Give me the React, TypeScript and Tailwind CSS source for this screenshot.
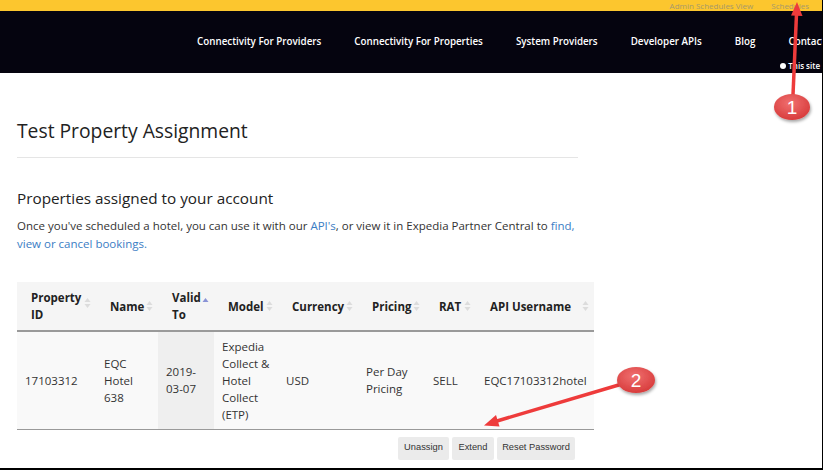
import React from 'react';

const FONT = { fontFamily: '"Open Sans", "Noto Sans", Arial, sans-serif' };

type Col = { label: string[]; width: number; sorted?: boolean };

const columns: Col[] = [
  { label: ['Property', 'ID'], width: 79 },
  { label: ['Name'], width: 62 },
  { label: ['Valid', 'To'], width: 56, sorted: true },
  { label: ['Model'], width: 64 },
  { label: ['Currency'], width: 80 },
  { label: ['Pricing'], width: 67 },
  { label: ['RAT'], width: 51 },
  { label: ['API Username'], width: 118 },
];

const row = [
  ['17103312'],
  ['EQC', 'Hotel', '638'],
  ['2019-', '03-07'],
  ['Expedia', 'Collect &', 'Hotel', 'Collect', '(ETP)'],
  ['USD'],
  ['Per Day', 'Pricing'],
  ['SELL'],
  ['EQC17103312hotel'],
];

// DataTables-style sort arrows
function SortIcon({ active }: { active?: boolean }) {
  return (
    <svg width="7" height="12" viewBox="0 0 7 12" className="shrink-0">
      <path d="M3.5 1 L6.5 5 L0.5 5 Z" fill={active ? '#8a93d6' : '#dcdcdc'} />
      {!active && <path d="M3.5 11 L6.5 7 L0.5 7 Z" fill="#dcdcdc" />}
    </svg>
  );
}

function Annotations() {
  return (
    <svg className="pointer-events-none absolute left-0 top-0" width="824" height="470">
      <defs>
        <radialGradient id="bubble" cx="45%" cy="35%" r="65%">
          <stop offset="0%" stopColor="#f07070" />
          <stop offset="100%" stopColor="#d83c3c" />
        </radialGradient>
        <filter id="shadow" x="-30%" y="-30%" width="160%" height="170%">
          <feDropShadow dx="1" dy="2" stdDeviation="1.5" floodColor="#000" floodOpacity="0.35" />
        </filter>
      </defs>
      {/* arrow 1 */}
      <line x1="793" y1="95" x2="796.5" y2="14" stroke="#ee3b3b" strokeWidth="3.5" />
      <path d="M797 2 L802.5 16 L791 15.5 Z" fill="#ee3b3b" />
      <ellipse cx="792" cy="107" rx="18" ry="13" fill="url(#bubble)" filter="url(#shadow)" />
      <text x="792" y="114" textAnchor="middle" fontSize="19" fill="#fff" fontFamily="Arial, sans-serif">1</text>
      {/* arrow 2 */}
      <line x1="622" y1="384" x2="497" y2="421" stroke="#ee3b3b" strokeWidth="3.5" />
      <path d="M484 425.5 L496 415 L499.5 426.5 Z" fill="#ee3b3b" />
      <ellipse cx="636" cy="380" rx="19" ry="13" fill="url(#bubble)" filter="url(#shadow)" />
      <text x="636" y="387" textAnchor="middle" fontSize="19" fill="#fff" fontFamily="Arial, sans-serif">2</text>
    </svg>
  );
}

export default function App() {
  return (
    <div className="relative h-[470px] w-[824px] overflow-hidden bg-white" style={FONT}>
      <div className="flex h-[470px] w-[823px] flex-col border-b-2 border-r border-black">
        {/* utility bar */}
        <div className="flex h-[11px] shrink-0 items-center justify-end gap-[18px] bg-[#fcc62e] pr-[13px] text-[8px] leading-none text-[#a6996c]">
          <span>Admin Schedules View</span>
          <span>Schedules</span>
        </div>

        {/* main nav */}
        <div className="relative h-[62px] shrink-0 overflow-hidden bg-[#05040f]">
          <nav className="flex h-[62px] items-center gap-[33px] whitespace-nowrap pl-[197px] text-[9.8px] font-semibold text-white">
            <span>Connectivity For Providers</span>
            <span>Connectivity For Properties</span>
            <span>System Providers</span>
            <span>Developer APIs</span>
            <span>Blog</span>
            <span>Contact</span>
          </nav>
          <div className="absolute right-[2px] top-[49px] flex items-center gap-[2px] text-[8px] font-semibold text-white">
            <span className="h-[6px] w-[6px] rounded-full bg-white" />
            <span>This site</span>
          </div>
        </div>

        {/* content */}
        <main className="pl-[17px] text-[#222]">
          <h1 className="mt-[44px] text-[19.3px] font-normal leading-[28px]">Test Property Assignment</h1>
          <hr className="mt-[12px] w-[561px] border-t border-[#e5e5e5]" />

          <h2 className="mt-[28px] text-[15.3px] font-normal leading-[24px]">Properties assigned to your account</h2>
          <p className="mt-[7px] w-[565px] text-[11.5px] leading-[18px] text-[#333]">
            Once you've scheduled a hotel, you can use it with our <a className="text-[#3b7dc4]">API's</a>, or view it in
            Expedia Partner Central to <a className="text-[#3b7dc4]">find, view or cancel bookings.</a>
          </p>

          <table className="mt-[29px] w-[577px] table-fixed border-collapse text-[11.5px] leading-[17px] text-[#333]">
            <colgroup>
              {columns.map((c, i) => (
                <col key={i} style={{ width: c.width }} />
              ))}
            </colgroup>
            <thead>
              <tr className="h-[49px] border-b-2 border-[#9a9a9a] bg-[#f5f5f5]">
                {columns.map((c, i) => (
                  <th key={i} className="px-0 text-left font-bold text-[#222]">
                    <div className="flex items-center justify-between pl-[14px] pr-[5px]">
                      <span>
                        {c.label.map((l, j) => (
                          <div key={j}>{l}</div>
                        ))}
                      </span>
                      <span className={c.label.length > 1 ? 'mb-[6px]' : ''}>
                        <SortIcon active={c.sorted} />
                      </span>
                    </div>
                  </th>
                ))}
              </tr>
            </thead>
            <tbody>
              <tr className="h-[98px] border-b border-[#9a9a9a] bg-[#f9f9f9]">
                {row.map((cell, i) => (
                  <td key={i} className={`pl-[8px] align-middle ${i === 2 ? 'bg-[#efefef]' : ''}`}>
                    {cell.map((l, j) => (
                      <div key={j}>{l}</div>
                    ))}
                  </td>
                ))}
              </tr>
            </tbody>
          </table>

          <div className="ml-[381px] mt-[7px] flex gap-[3px] text-[9.3px]" style={{ fontFamily: 'Arial, "Liberation Sans", sans-serif' }}>
            <button className="h-[23px] w-[51px] rounded-[2px] bg-[#ebebeb] text-[#333]">Unassign</button>
            <button className="h-[23px] w-[42px] rounded-[2px] bg-[#ebebeb] text-[#333]">Extend</button>
            <button className="h-[23px] w-[78px] rounded-[2px] bg-[#ebebeb] text-[#333]">Reset Password</button>
          </div>
        </main>
      </div>
      <Annotations />
    </div>
  );
}
